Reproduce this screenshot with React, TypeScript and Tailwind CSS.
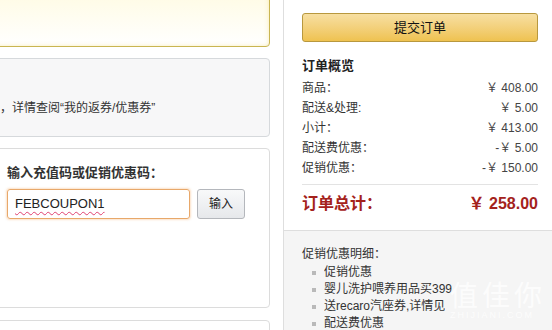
import React from 'react';

const font = { fontFamily: '"Liberation Sans", "Noto Sans CJK SC", sans-serif' };

type Row = { label: string; value: string };

const rows: Row[] = [
  { label: '商品：', value: '￥ 408.00' },
  { label: '配送&处理:', value: '￥ 5.00' },
  { label: '小计：', value: '￥ 413.00' },
  { label: '配送费优惠：', value: '-￥ 5.00' },
  { label: '促销优惠：', value: '-￥ 150.00' },
];

const promos = ['促销优惠', '婴儿洗护喂养用品买399', '送recaro汽座券,详情见', '配送费优惠'];

export default function App() {
  return (
    <div className="flex w-[552px] h-[330px] overflow-hidden bg-white text-[#333]" style={font}>
      {/* left column */}
      <div className="w-[283px] shrink-0 flex flex-col">
        <div className="-mt-[10px] -ml-[10px] w-[280px] h-[57px] shrink-0 rounded-[4px] border border-[#c9b552] bg-gradient-to-b from-[#fffbe3] to-white shadow-[inset_0_0_4px_rgba(240,215,110,0.5)]" />

        <div className="mt-[11px] -ml-[10px] w-[280px] h-[79px] shrink-0 rounded-[4px] border border-[#d6d9dc] bg-[#f7f7f8] pt-[40px] pl-[9px] text-[12px] leading-[18px] whitespace-nowrap">
          ，详情查阅“我的返券/优惠券”
        </div>

        <div className="mt-[11px] -ml-[10px] w-[280px] h-[160px] shrink-0 rounded-[4px] border border-[#dcdcdc] bg-white pl-[16px] pt-[15px]">
          <div className="text-[13px] font-bold leading-[18px] text-[#333]">输入充值码或促销优惠码：</div>
          <div className="mt-[7px] flex items-center gap-[7px]">
            <div className="w-[183px] h-[30px] rounded-[3px] border border-[#e8a86a] shadow-[0_0_2px_1px_rgba(240,170,100,0.35)] flex items-center pl-[7px] text-[13px] text-[#222]">
              <span className="underline decoration-wavy decoration-[#e04070] decoration-1 underline-offset-[3px]">FEBCOUPON1</span>
            </div>
            <button className="w-[48px] h-[30px] rounded-[3px] border border-[#b4b7bc] bg-gradient-to-b from-[#f8f9fa] to-[#e6e8eb] text-[12px] text-[#222]">
              输入
            </button>
          </div>
        </div>

        <div className="mt-[12px] -ml-[10px] w-[280px] h-[40px] shrink-0 rounded-[4px] border border-[#dcdcdc] bg-white" />
      </div>

      {/* right column */}
      <div className="flex-1 border-l border-[#dedede] flex flex-col relative">
        <div className="pl-[18px] pr-[14px] pt-[13px]">
          <button className="w-full h-[29px] rounded-[3px] border border-[#b8983e] bg-gradient-to-b from-[#f7dfa1] to-[#efc24f] text-[13px] text-[#111]">
            提交订单
          </button>
          <div className="mt-[15px] text-[13px] font-bold leading-[18px] text-[#222]">订单概览</div>
          <div className="mt-[3px] text-[12px] text-[#333]">
            {rows.map((r) => (
              <div key={r.label} className="flex justify-between h-[20px] items-center">
                <span>{r.label}</span>
                <span className="text-[#444]">{r.value}</span>
              </div>
            ))}
          </div>
          <div className="mt-[6px] border-t border-[#e3e3e3]" />
          <div className="flex justify-between items-center h-[38px] text-[16px] font-bold text-[#a4221c]">
            <span>订单总计：</span>
            <span>￥ 258.00</span>
          </div>
        </div>

        <div className="mt-[7px] flex-1 border-t border-[#dedede] bg-[#f5f5f5] pl-[18px] pt-[14px] text-[12px] text-[#333]">
          <div className="leading-[18px]">促销优惠明细：</div>
          <ul className="mt-[1px]">
            {promos.map((p) => (
              <li key={p} className="flex items-center h-[17px] leading-[17px]">
                <span className="ml-[10px] w-[4px] h-[4px] bg-[#b9b9b9] shrink-0" />
                <span className="ml-[8px] whitespace-nowrap max-w-[132px] overflow-hidden">{p}</span>
              </li>
            ))}
          </ul>
        </div>

        {/* watermark overlay */}
        <div className="absolute left-[166px] top-[278px] flex flex-col items-start text-white/75 pointer-events-none">
          <div className="text-[28px] leading-[32px] tracking-[4px] whitespace-nowrap" style={{ fontFamily: '"Noto Sans CJK SC", sans-serif' }}>
            值佳你
          </div>
          <div className="text-[9px] leading-[11px] tracking-[2px] whitespace-nowrap">ZHIJIANI.COM</div>
        </div>
      </div>
    </div>
  );
}
